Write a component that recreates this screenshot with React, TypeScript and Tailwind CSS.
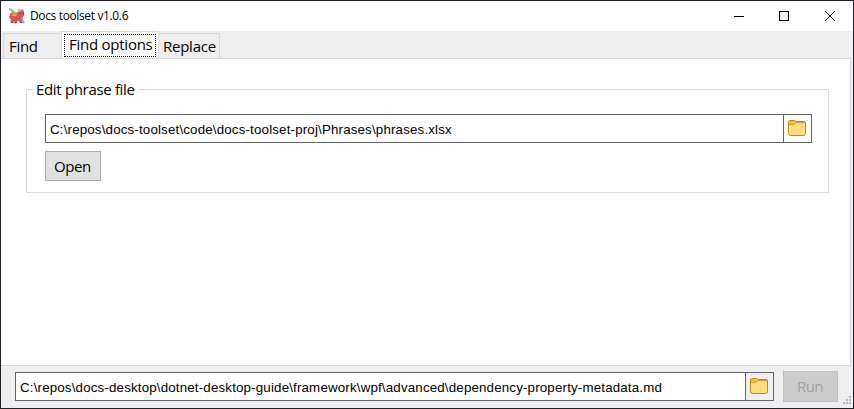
import React from "react";

function PigIcon() {
  return (
    <svg width="18" height="18" viewBox="0 0 18 18" className="shrink-0">
      <path d="M2 6.500l3.500-1.500 4 .5 1-2.500 3-.5 2.500.5v5.500L14.500 11l.5 2.500-1.500 2.500H12l-1-2.200-2 .4-.5 2.300H6.500L6 14l-1.500 2H2.500l.2-3.500L1.500 10.500 .5 8.500l1.500.3z" fill="#d95355" />
      <path d="M1 2.200l2-.9 5.500 4.400.8 1.800-2.500.3z" fill="#9cc65a" />
      <path d="M2.500 7.200l4.500.3 2 1-4 .7z" fill="#efb04c" />
      <path d="M9.500 2.500l1.500-1 2 1.500v1.500H10zM14.500 1.500l1.500 1v1.500h-1.500z" fill="#c5c8d6" />
      <path d="M.8 1l2 1.500M12.500 11l3 4" stroke="#b0aeb2" strokeWidth="1" fill="none" />
      <circle cx="15.300" cy="15" r="1.500" fill="#b1a9ad" />
      <path d="M12 6h1v1h-1zM15 6h1v1h-1zM4 15h1.500v1H4zM7 15h1.500v1H7zM12 15h1.500v1H12z" fill="#793136" />
    </svg>
  );
}

function FolderIcon() {
  return (
    <svg width="18" height="16" viewBox="0 0 18 16" className="mr-0.5 mb-px">
      <path d="M.5 2q0-1.500 1.500-1.500h4.500q1 0 1.300 1H16q1.500 0 1.500 1.500v10.500q0 2-2 2h-13q-2 0-2-2z" fill="#ffdc7c" stroke="#b98a12" />
      <path d="M1 1.800q0-.8.8-.8h4.700q.5 0 .5 1v1.300l-1 .9H1z" fill="#f2c02c" />
      <path d="M1 4.600h5l1.800-2H17" fill="none" stroke="#c69a34" />
    </svg>
  );
}

function PathField({ value, button }: { value: string; button: string }) {
  return (
    <div className="flex h-[29px] grow border border-[#646468] bg-white">
      <div className="flex grow items-center whitespace-nowrap pt-0.5 pl-1 font-['Liberation_Sans',Arial,sans-serif] text-[13.33px] leading-4 tracking-[0.165px]">{value}</div>
      <button className={`flex w-7 shrink-0 items-center justify-center border-l border-[#646468] ${button}`}>
        <FolderIcon />
      </button>
    </div>
  );
}

const ui = "whitespace-nowrap font-['Open_Sans','Noto_Sans',sans-serif] text-[15px] leading-[18px]";

export default function App() {
  return (
    <div className="flex h-[409px] w-[854px] flex-col overflow-hidden border border-[#222024] bg-[#efefef] text-black">
      <header className="flex h-[30px] shrink-0 items-center bg-white pl-[7px]">
        <PigIcon />
        <span className="ml-1 whitespace-nowrap font-['Open_Sans','Noto_Sans',sans-serif] text-[12px] leading-4 tracking-[-0.36px]">Docs toolset v1.0.6</span>
        <svg className="ml-auto shrink-0" width="137" height="28" viewBox="716 1 137 28" fill="none" stroke="#000" shapeRendering="crispEdges">
          <path d="M734 15.500h10M779.500 10.500h9v9h-9z" />
          <path d="M825 10l10 10M835 10l-10 10" shapeRendering="auto" />
        </svg>
      </header>
      <nav className="flex h-[27px] shrink-0 items-end pl-0.5">
        <div className={`${ui} h-[25px] w-[58px] border-t border-l border-[#d9d9d9] pt-[3px] pl-[5px] tracking-[-0.3px]`}>Find</div>
        <div className="h-[27px] w-[98px] border-x border-t border-[#d9d9d9] bg-white px-0.5 pt-0.5">
          <div className={`${ui} h-[23px] border border-dotted border-black pl-1 tracking-[-0.25px]`}>Find options</div>
        </div>
        <div className={`${ui} h-[25px] w-[61px] border-t border-r border-[#d9d9d9] pt-[3px] pl-1 tracking-[-0.25px]`}>Replace</div>
      </nav>
      <main className="mr-0.5 h-[308px] shrink-0 border border-l-0 border-[#d9d9d9] bg-white pt-[30px] pr-[21px] pl-[25px]">
        <section className="h-[104px] border border-[#dcdcdc] px-[18px]">
          <h2 className={`${ui} -mt-2.5 -ml-3 w-[106px] bg-white pl-[3px] tracking-[-0.33px]`}>Edit phrase file</h2>
          <div className="mt-4 -mr-0.5 flex w-[767px]">
            <PathField value="C:\repos\docs-toolset\code\docs-toolset-proj\Phrases\phrases.xlsx" button="bg-white" />
          </div>
          <button className={`${ui} mt-2 flex h-[30px] w-14 items-center border border-[#adadad] bg-[#e1e1e1] pb-px pl-2 tracking-[-0.4px]`}>Open</button>
        </section>
      </main>
      <footer className="relative flex grow items-start pt-[5px] pl-3.5">
        <div className="mt-px flex w-[759px]">
          <PathField value="C:\repos\docs-desktop\dotnet-desktop-guide\framework\wpf\advanced\dependency-property-metadata.md" button="bg-[#efefef]" />
        </div>
        <button className={`${ui} ml-[9px] flex h-[31px] w-[55px] items-center border border-[#bfbfbf] bg-[#cccccc] pb-0.5 pl-[13px] tracking-[-0.6px] text-[#a0a0a0]`}>Run</button>
        <svg className="absolute right-0.5 bottom-1" width="8" height="8" viewBox="0 0 8 8" fill="#b8b8b8">
          <path d="M6 0h2v2H6zM3 3h2v2H3zM6 3h2v2H6zM0 6h2v2H0zM3 6h2v2H3zM6 6h2v2H6z" />
        </svg>
      </footer>
    </div>
  );
}
